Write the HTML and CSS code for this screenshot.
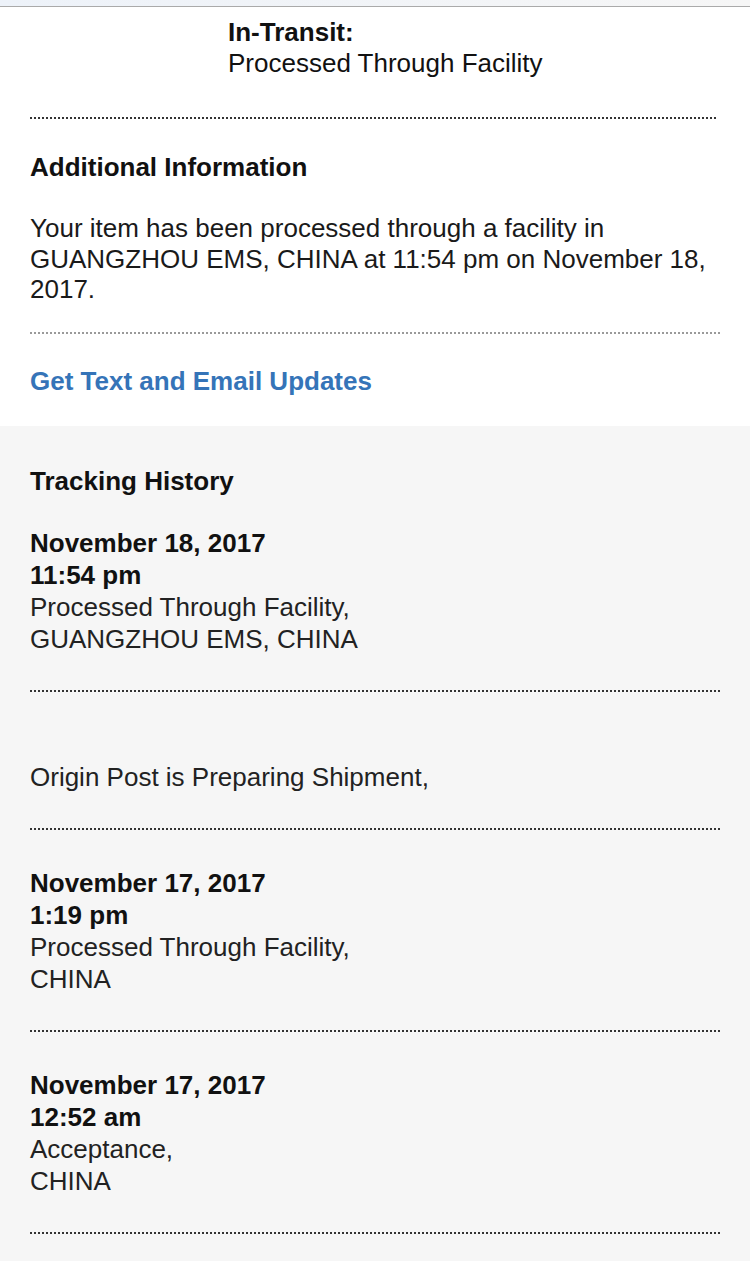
FILE: index.html
```html
<!DOCTYPE html>
<html lang="en">
<head>
<meta charset="utf-8">
<title>Tracking</title>
<link rel="stylesheet" href="styles.css">
</head>
<body>
<div class="topbar"></div>
<div class="status">
  <div class="status-label">In-Transit:</div>
  <div class="status-value">Processed Through Facility</div>
</div>
<div class="info">
  <div class="rule rule-dark rule-short"></div>
  <h2 class="info-title">Additional Information</h2>
  <p class="info-text">Your item has been processed through a facility in GUANGZHOU EMS, CHINA at 11:54 pm on November 18, 2017.</p>
  <div class="rule rule-light"></div>
  <a class="updates-link" href="#">Get Text and Email Updates</a>
</div>
<div class="history">
  <h2 class="history-title">Tracking History</h2>
  <div class="entry">
    <div class="entry-date">November 18, 2017</div>
    <div class="entry-time">11:54 pm</div>
    <div class="entry-text">Processed Through Facility,</div>
    <div class="entry-text">GUANGZHOU EMS, CHINA</div>
  </div>
  <div class="entry">
    <div class="entry-date entry-empty"></div>
    <div class="entry-text">Origin Post is Preparing Shipment,</div>
  </div>
  <div class="entry">
    <div class="entry-date">November 17, 2017</div>
    <div class="entry-time">1:19 pm</div>
    <div class="entry-text">Processed Through Facility,</div>
    <div class="entry-text">CHINA</div>
  </div>
  <div class="entry">
    <div class="entry-date">November 17, 2017</div>
    <div class="entry-time">12:52 am</div>
    <div class="entry-text">Acceptance,</div>
    <div class="entry-text">CHINA</div>
  </div>
</div>
</body>
</html>
```
FILE: styles.css
```css
html, body {
  margin: 0;
  padding: 0;
}
body {
  font-family: "Liberation Sans", Arial, Helvetica, sans-serif;
  font-size: 26px;
  color: #111;
  background: #f6f6f6;
}
.topbar {
  height: 6px;
  background: linear-gradient(to right, #edf2f9, #f6f6f6);
  border-bottom: 1px solid #aaaaaa;
}
.status {
  background: #fff;
  padding: 9px 0 38px 228px;
  line-height: 32px;
}
.status-label {
  font-weight: bold;
}
.status-value {
  margin-top: -1px;
}
.info {
  background: #fff;
  padding: 0 30px 29px;
}
.rule {
  height: 0;
  border-top: 2px dotted #333;
}
.rule-short {
  width: 686px;
}
.rule-light {
  border-top-color: #9a9a9a;
}
.info-title {
  margin: 32px 0 0;
  font-size: 26px;
  line-height: 32px;
  font-weight: bold;
}
.info-text {
  margin: 30px 0 27px;
  line-height: 30.5px;
  color: #1a1a1a;
}
.updates-link {
  display: block;
  margin-top: 31px;
  line-height: 32px;
  font-weight: bold;
  color: #3574b8;
  text-decoration: none;
}
.history {
  background: #f6f6f6;
  padding: 39px 30px 30px;
  color: #222;
}
.history-title {
  margin: 0;
  font-size: 26px;
  line-height: 32px;
  font-weight: bold;
  color: #111;
}
.entry {
  padding: 36.5px 0 35.5px;
  border-bottom: 2px dotted #333;
  line-height: 32px;
}
.entry:first-of-type {
  padding-top: 30px;
}
.entry-date,
.entry-time {
  font-weight: bold;
  color: #111;
}
.entry-empty {
  height: 32px;
}
```
